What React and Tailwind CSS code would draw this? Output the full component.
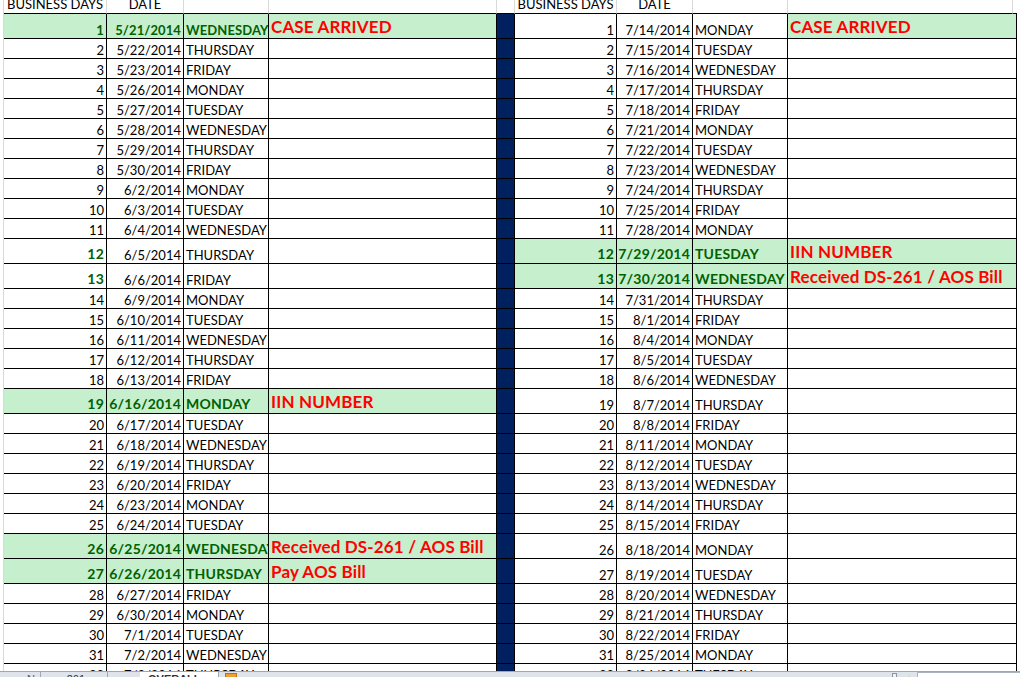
import React from 'react';

const DAYS = ['MONDAY', 'TUESDAY', 'WEDNESDAY', 'THURSDAY', 'FRIDAY'];

const leftDates = ['5/21/2014','5/22/2014','5/23/2014','5/26/2014','5/27/2014','5/28/2014','5/29/2014','5/30/2014','6/2/2014','6/3/2014','6/4/2014','6/5/2014','6/6/2014','6/9/2014','6/10/2014','6/11/2014','6/12/2014','6/13/2014','6/16/2014','6/17/2014','6/18/2014','6/19/2014','6/20/2014','6/23/2014','6/24/2014','6/25/2014','6/26/2014','6/27/2014','6/30/2014','7/1/2014','7/2/2014','7/3/2014'];
const rightDates = ['7/14/2014','7/15/2014','7/16/2014','7/17/2014','7/18/2014','7/21/2014','7/22/2014','7/23/2014','7/24/2014','7/25/2014','7/28/2014','7/29/2014','7/30/2014','7/31/2014','8/1/2014','8/4/2014','8/5/2014','8/6/2014','8/7/2014','8/8/2014','8/11/2014','8/12/2014','8/13/2014','8/14/2014','8/15/2014','8/18/2014','8/19/2014','8/20/2014','8/21/2014','8/22/2014','8/25/2014','8/26/2014'];

const tallRows = [1, 12, 13, 19, 26, 27];

const leftSpecial = {
  1: { kind: 'green', small: true, label: 'CASE ARRIVED' },
  12: { kind: 'num' },
  13: { kind: 'num' },
  19: { kind: 'green', label: 'IIN NUMBER' },
  26: { kind: 'green', label: 'Received DS-261 / AOS Bill' },
  27: { kind: 'green', label: 'Pay AOS Bill' },
};
const rightSpecial = {
  1: { kind: 'label', label: 'CASE ARRIVED' },
  12: { kind: 'green', label: 'IIN NUMBER' },
  13: { kind: 'green', label: 'Received DS-261 / AOS Bill' },
};

const rows = leftDates.map((d, i) => ({
  n: i + 1,
  tall: tallRows.includes(i + 1),
  l: { date: d, day: DAYS[(i + 2) % 5], ...(leftSpecial[i + 1] || {}) },
  r: { date: rightDates[i], day: DAYS[i % 5], ...(rightSpecial[i + 1] || {}) },
}));

const base = 'shrink-0 flex items-end overflow-hidden whitespace-nowrap border-r border-b border-black';
const normalTxt = 'text-[13px] leading-[16px] text-black font-normal';
const boldSmall = 'text-[13px] leading-[16px] text-[#006100] font-bold tracking-[0.1px]';
const boldBig = 'text-[14px] leading-[16px] text-[#006100] font-bold tracking-[0.2px] pb-[1px]';
const labelTxt = 'text-[17px] leading-[20px] text-[#ff0000] font-bold tracking-[0.15px] pb-[1px]';
const green = 'bg-[#c6efce]';

function Block({ n, data, widths }) {
  const g = data.kind === 'green';
  const numBold = g || data.kind === 'num';
  const lblGreen = g || data.kind === 'label';
  const bold = data.small ? boldSmall : boldBig;
  return (
    <>
      <div className={`${base} ${widths[0]} justify-end pr-[2px] ${g ? green : ''} ${numBold ? bold : normalTxt}`}>{n}</div>
      <div className={`${base} ${widths[1]} justify-end pr-[2px] ${g ? green : ''} ${g ? bold : normalTxt}`}>{data.date}</div>
      <div className={`${base} ${widths[2]} pl-[2px] ${g ? green : ''} ${g ? bold : normalTxt}`}>{data.day}</div>
      <div className={`${base} ${widths[3]} pl-[2px] ${lblGreen ? green : ''} ${labelTxt}`}>{data.label || ''}</div>
    </>
  );
}

const leftW = ['w-[103px]', 'w-[77px]', 'w-[85px]', 'w-[228px]'];
const rightW = ['w-[102px]', 'w-[76px]', 'w-[95px]', 'w-[229px]'];

function Row({ r }) {
  return (
    <div className={`flex shrink-0 ${r.tall ? 'h-[25px]' : 'h-[20px]'}`}>
      <div className="w-[4px] shrink-0 border-r border-[#d9d9d9]" />
      <Block n={r.n} data={r.l} widths={leftW} />
      <div className="w-[18px] shrink-0 bg-[#002060] border-r border-b border-black" />
      <Block n={r.n} data={r.r} widths={rightW} />
      <div className="flex-1" />
    </div>
  );
}

const hdr = 'shrink-0 flex items-end justify-center overflow-hidden whitespace-nowrap border-r border-[#d9d9d9] border-b border-b-black text-[13px] leading-[16px] text-black pb-[1px]';

function Header() {
  return (
    <div className="flex h-[14px] shrink-0">
      <div className="w-[4px] shrink-0 border-r border-[#d9d9d9]" />
      <div className={`${hdr} w-[103px]`}>BUSINESS DAYS</div>
      <div className={`${hdr} w-[77px]`}>DATE</div>
      <div className={`${hdr} w-[85px]`} />
      <div className={`${hdr} w-[228px]`} />
      <div className={`${hdr} w-[18px]`} />
      <div className={`${hdr} w-[102px]`}>BUSINESS DAYS</div>
      <div className={`${hdr} w-[76px]`}>DATE</div>
      <div className={`${hdr} w-[95px]`} />
      <div className={`${hdr} w-[225px]`} />
      <div className="w-[4px] shrink-0 border-b border-black" />
      <div className="flex-1" />
    </div>
  );
}

function TabBar() {
  return (
    <div className="h-[6px] shrink-0 overflow-hidden flex items-start bg-[#dfe4ea] border-t border-[#9ea7b3] font-['Liberation_Sans',sans-serif] text-[11px] leading-[12px] text-[#333]">
      <div className="w-[40px] shrink-0 flex gap-[6px] pl-[3px] pt-[1px] text-[#4a5568]">
        <span>◂</span><span>▸</span><span>N</span>
      </div>
      <div className="w-[1px] h-full bg-[#9ea7b3]" />
      <div className="w-[66px] shrink-0 pl-[22px] pt-[1px]">-261</div>
      <div className="w-[1px] h-full bg-[#9ea7b3]" />
      <div className="w-[32px] shrink-0" />
      <div className="w-[78px] shrink-0 bg-white pl-[8px] pt-[1px] font-bold overflow-hidden">OVERALL</div>
      <div className="w-[1px] h-full bg-[#9ea7b3]" />
      <div className="ml-[6px] w-[12px] h-[5px] mt-[1px] bg-[#f0a030] border border-[#c07010]" />
      <div className="flex-1" />
      <div className="w-[5px] h-[5px] mt-[1px] border border-[#8a94a3] bg-[#eef1f5]" />
      <div className="w-[20px] shrink-0 pl-[7px] text-[#444]">◂</div>
      <div className="w-[103px] shrink-0 h-full bg-white border-l border-t border-[#aab3bf]" />
    </div>
  );
}

export default function App() {
  return (
    <div className="w-[1020px] h-[677px] bg-white flex flex-col overflow-hidden font-['Lato',sans-serif]">
      <div className="flex-1 flex flex-col overflow-hidden">
        <Header />
        {rows.map((r) => (
          <Row key={r.n} r={r} />
        ))}
      </div>
      <TabBar />
    </div>
  );
}
